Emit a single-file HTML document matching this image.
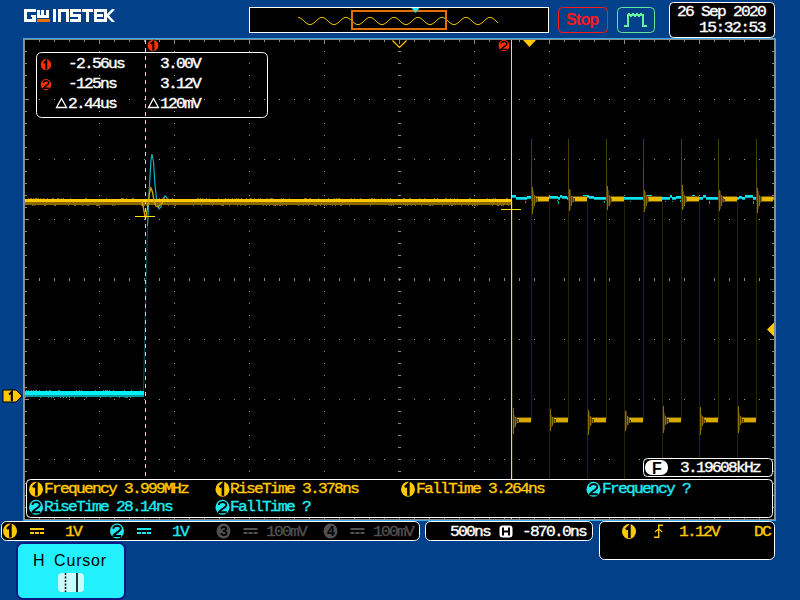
<!DOCTYPE html>
<html><head><meta charset="utf-8"><style>
html,body{margin:0;padding:0;}
body{width:800px;height:600px;overflow:hidden;background:#02408a;position:relative;font-family:"Liberation Sans",sans-serif;}
svg{position:absolute;left:0;top:0;}
</style></head><body>
<svg width="800" height="600" viewBox="0 0 800 600" shape-rendering="auto">
<rect x="23" y="38" width="753" height="483" fill="#3fa9e3" />
<rect x="24" y="39" width="751" height="481" fill="#8a8a8a" />
<rect x="25" y="40" width="749" height="479" fill="#000" />
<path d="M99 51h1v1h-1zM99 63h1v1h-1zM99 75h1v1h-1zM99 87h1v1h-1zM99 111h1v1h-1zM99 123h1v1h-1zM99 135h1v1h-1zM99 147h1v1h-1zM99 171h1v1h-1zM99 183h1v1h-1zM99 195h1v1h-1zM99 207h1v1h-1zM99 231h1v1h-1zM99 243h1v1h-1zM99 255h1v1h-1zM99 267h1v1h-1zM99 291h1v1h-1zM99 303h1v1h-1zM99 315h1v1h-1zM99 327h1v1h-1zM99 351h1v1h-1zM99 363h1v1h-1zM99 375h1v1h-1zM99 387h1v1h-1zM99 411h1v1h-1zM99 423h1v1h-1zM99 435h1v1h-1zM99 447h1v1h-1zM99 471h1v1h-1zM99 483h1v1h-1zM99 495h1v1h-1zM99 507h1v1h-1zM174 51h1v1h-1zM174 63h1v1h-1zM174 75h1v1h-1zM174 87h1v1h-1zM174 111h1v1h-1zM174 123h1v1h-1zM174 135h1v1h-1zM174 147h1v1h-1zM174 171h1v1h-1zM174 183h1v1h-1zM174 195h1v1h-1zM174 207h1v1h-1zM174 231h1v1h-1zM174 243h1v1h-1zM174 255h1v1h-1zM174 267h1v1h-1zM174 291h1v1h-1zM174 303h1v1h-1zM174 315h1v1h-1zM174 327h1v1h-1zM174 351h1v1h-1zM174 363h1v1h-1zM174 375h1v1h-1zM174 387h1v1h-1zM174 411h1v1h-1zM174 423h1v1h-1zM174 435h1v1h-1zM174 447h1v1h-1zM174 471h1v1h-1zM174 483h1v1h-1zM174 495h1v1h-1zM174 507h1v1h-1zM249 51h1v1h-1zM249 63h1v1h-1zM249 75h1v1h-1zM249 87h1v1h-1zM249 111h1v1h-1zM249 123h1v1h-1zM249 135h1v1h-1zM249 147h1v1h-1zM249 171h1v1h-1zM249 183h1v1h-1zM249 195h1v1h-1zM249 207h1v1h-1zM249 231h1v1h-1zM249 243h1v1h-1zM249 255h1v1h-1zM249 267h1v1h-1zM249 291h1v1h-1zM249 303h1v1h-1zM249 315h1v1h-1zM249 327h1v1h-1zM249 351h1v1h-1zM249 363h1v1h-1zM249 375h1v1h-1zM249 387h1v1h-1zM249 411h1v1h-1zM249 423h1v1h-1zM249 435h1v1h-1zM249 447h1v1h-1zM249 471h1v1h-1zM249 483h1v1h-1zM249 495h1v1h-1zM249 507h1v1h-1zM324 51h1v1h-1zM324 63h1v1h-1zM324 75h1v1h-1zM324 87h1v1h-1zM324 111h1v1h-1zM324 123h1v1h-1zM324 135h1v1h-1zM324 147h1v1h-1zM324 171h1v1h-1zM324 183h1v1h-1zM324 195h1v1h-1zM324 207h1v1h-1zM324 231h1v1h-1zM324 243h1v1h-1zM324 255h1v1h-1zM324 267h1v1h-1zM324 291h1v1h-1zM324 303h1v1h-1zM324 315h1v1h-1zM324 327h1v1h-1zM324 351h1v1h-1zM324 363h1v1h-1zM324 375h1v1h-1zM324 387h1v1h-1zM324 411h1v1h-1zM324 423h1v1h-1zM324 435h1v1h-1zM324 447h1v1h-1zM324 471h1v1h-1zM324 483h1v1h-1zM324 495h1v1h-1zM324 507h1v1h-1zM474 51h1v1h-1zM474 63h1v1h-1zM474 75h1v1h-1zM474 87h1v1h-1zM474 111h1v1h-1zM474 123h1v1h-1zM474 135h1v1h-1zM474 147h1v1h-1zM474 171h1v1h-1zM474 183h1v1h-1zM474 195h1v1h-1zM474 207h1v1h-1zM474 231h1v1h-1zM474 243h1v1h-1zM474 255h1v1h-1zM474 267h1v1h-1zM474 291h1v1h-1zM474 303h1v1h-1zM474 315h1v1h-1zM474 327h1v1h-1zM474 351h1v1h-1zM474 363h1v1h-1zM474 375h1v1h-1zM474 387h1v1h-1zM474 411h1v1h-1zM474 423h1v1h-1zM474 435h1v1h-1zM474 447h1v1h-1zM474 471h1v1h-1zM474 483h1v1h-1zM474 495h1v1h-1zM474 507h1v1h-1zM549 51h1v1h-1zM549 63h1v1h-1zM549 75h1v1h-1zM549 87h1v1h-1zM549 111h1v1h-1zM549 123h1v1h-1zM549 135h1v1h-1zM549 147h1v1h-1zM549 171h1v1h-1zM549 183h1v1h-1zM549 195h1v1h-1zM549 207h1v1h-1zM549 231h1v1h-1zM549 243h1v1h-1zM549 255h1v1h-1zM549 267h1v1h-1zM549 291h1v1h-1zM549 303h1v1h-1zM549 315h1v1h-1zM549 327h1v1h-1zM549 351h1v1h-1zM549 363h1v1h-1zM549 375h1v1h-1zM549 387h1v1h-1zM549 411h1v1h-1zM549 423h1v1h-1zM549 435h1v1h-1zM549 447h1v1h-1zM549 471h1v1h-1zM549 483h1v1h-1zM549 495h1v1h-1zM549 507h1v1h-1zM624 51h1v1h-1zM624 63h1v1h-1zM624 75h1v1h-1zM624 87h1v1h-1zM624 111h1v1h-1zM624 123h1v1h-1zM624 135h1v1h-1zM624 147h1v1h-1zM624 171h1v1h-1zM624 183h1v1h-1zM624 195h1v1h-1zM624 207h1v1h-1zM624 231h1v1h-1zM624 243h1v1h-1zM624 255h1v1h-1zM624 267h1v1h-1zM624 291h1v1h-1zM624 303h1v1h-1zM624 315h1v1h-1zM624 327h1v1h-1zM624 351h1v1h-1zM624 363h1v1h-1zM624 375h1v1h-1zM624 387h1v1h-1zM624 411h1v1h-1zM624 423h1v1h-1zM624 435h1v1h-1zM624 447h1v1h-1zM624 471h1v1h-1zM624 483h1v1h-1zM624 495h1v1h-1zM624 507h1v1h-1zM699 51h1v1h-1zM699 63h1v1h-1zM699 75h1v1h-1zM699 87h1v1h-1zM699 111h1v1h-1zM699 123h1v1h-1zM699 135h1v1h-1zM699 147h1v1h-1zM699 171h1v1h-1zM699 183h1v1h-1zM699 195h1v1h-1zM699 207h1v1h-1zM699 231h1v1h-1zM699 243h1v1h-1zM699 255h1v1h-1zM699 267h1v1h-1zM699 291h1v1h-1zM699 303h1v1h-1zM699 315h1v1h-1zM699 327h1v1h-1zM699 351h1v1h-1zM699 363h1v1h-1zM699 375h1v1h-1zM699 387h1v1h-1zM699 411h1v1h-1zM699 423h1v1h-1zM699 435h1v1h-1zM699 447h1v1h-1zM699 471h1v1h-1zM699 483h1v1h-1zM699 495h1v1h-1zM699 507h1v1h-1zM39 99h1v1h-1zM54 99h1v1h-1zM69 99h1v1h-1zM84 99h1v1h-1zM99 99h1v1h-1zM114 99h1v1h-1zM129 99h1v1h-1zM144 99h1v1h-1zM159 99h1v1h-1zM174 99h1v1h-1zM189 99h1v1h-1zM204 99h1v1h-1zM219 99h1v1h-1zM234 99h1v1h-1zM249 99h1v1h-1zM264 99h1v1h-1zM279 99h1v1h-1zM294 99h1v1h-1zM309 99h1v1h-1zM324 99h1v1h-1zM339 99h1v1h-1zM354 99h1v1h-1zM369 99h1v1h-1zM384 99h1v1h-1zM399 99h1v1h-1zM414 99h1v1h-1zM429 99h1v1h-1zM444 99h1v1h-1zM459 99h1v1h-1zM474 99h1v1h-1zM489 99h1v1h-1zM504 99h1v1h-1zM519 99h1v1h-1zM534 99h1v1h-1zM549 99h1v1h-1zM564 99h1v1h-1zM579 99h1v1h-1zM594 99h1v1h-1zM609 99h1v1h-1zM624 99h1v1h-1zM639 99h1v1h-1zM654 99h1v1h-1zM669 99h1v1h-1zM684 99h1v1h-1zM699 99h1v1h-1zM714 99h1v1h-1zM729 99h1v1h-1zM744 99h1v1h-1zM759 99h1v1h-1zM39 159h1v1h-1zM54 159h1v1h-1zM69 159h1v1h-1zM84 159h1v1h-1zM99 159h1v1h-1zM114 159h1v1h-1zM129 159h1v1h-1zM144 159h1v1h-1zM159 159h1v1h-1zM174 159h1v1h-1zM189 159h1v1h-1zM204 159h1v1h-1zM219 159h1v1h-1zM234 159h1v1h-1zM249 159h1v1h-1zM264 159h1v1h-1zM279 159h1v1h-1zM294 159h1v1h-1zM309 159h1v1h-1zM324 159h1v1h-1zM339 159h1v1h-1zM354 159h1v1h-1zM369 159h1v1h-1zM384 159h1v1h-1zM399 159h1v1h-1zM414 159h1v1h-1zM429 159h1v1h-1zM444 159h1v1h-1zM459 159h1v1h-1zM474 159h1v1h-1zM489 159h1v1h-1zM504 159h1v1h-1zM519 159h1v1h-1zM534 159h1v1h-1zM549 159h1v1h-1zM564 159h1v1h-1zM579 159h1v1h-1zM594 159h1v1h-1zM609 159h1v1h-1zM624 159h1v1h-1zM639 159h1v1h-1zM654 159h1v1h-1zM669 159h1v1h-1zM684 159h1v1h-1zM699 159h1v1h-1zM714 159h1v1h-1zM729 159h1v1h-1zM744 159h1v1h-1zM759 159h1v1h-1zM39 219h1v1h-1zM54 219h1v1h-1zM69 219h1v1h-1zM84 219h1v1h-1zM99 219h1v1h-1zM114 219h1v1h-1zM129 219h1v1h-1zM144 219h1v1h-1zM159 219h1v1h-1zM174 219h1v1h-1zM189 219h1v1h-1zM204 219h1v1h-1zM219 219h1v1h-1zM234 219h1v1h-1zM249 219h1v1h-1zM264 219h1v1h-1zM279 219h1v1h-1zM294 219h1v1h-1zM309 219h1v1h-1zM324 219h1v1h-1zM339 219h1v1h-1zM354 219h1v1h-1zM369 219h1v1h-1zM384 219h1v1h-1zM399 219h1v1h-1zM414 219h1v1h-1zM429 219h1v1h-1zM444 219h1v1h-1zM459 219h1v1h-1zM474 219h1v1h-1zM489 219h1v1h-1zM504 219h1v1h-1zM519 219h1v1h-1zM534 219h1v1h-1zM549 219h1v1h-1zM564 219h1v1h-1zM579 219h1v1h-1zM594 219h1v1h-1zM609 219h1v1h-1zM624 219h1v1h-1zM639 219h1v1h-1zM654 219h1v1h-1zM669 219h1v1h-1zM684 219h1v1h-1zM699 219h1v1h-1zM714 219h1v1h-1zM729 219h1v1h-1zM744 219h1v1h-1zM759 219h1v1h-1zM39 339h1v1h-1zM54 339h1v1h-1zM69 339h1v1h-1zM84 339h1v1h-1zM99 339h1v1h-1zM114 339h1v1h-1zM129 339h1v1h-1zM144 339h1v1h-1zM159 339h1v1h-1zM174 339h1v1h-1zM189 339h1v1h-1zM204 339h1v1h-1zM219 339h1v1h-1zM234 339h1v1h-1zM249 339h1v1h-1zM264 339h1v1h-1zM279 339h1v1h-1zM294 339h1v1h-1zM309 339h1v1h-1zM324 339h1v1h-1zM339 339h1v1h-1zM354 339h1v1h-1zM369 339h1v1h-1zM384 339h1v1h-1zM399 339h1v1h-1zM414 339h1v1h-1zM429 339h1v1h-1zM444 339h1v1h-1zM459 339h1v1h-1zM474 339h1v1h-1zM489 339h1v1h-1zM504 339h1v1h-1zM519 339h1v1h-1zM534 339h1v1h-1zM549 339h1v1h-1zM564 339h1v1h-1zM579 339h1v1h-1zM594 339h1v1h-1zM609 339h1v1h-1zM624 339h1v1h-1zM639 339h1v1h-1zM654 339h1v1h-1zM669 339h1v1h-1zM684 339h1v1h-1zM699 339h1v1h-1zM714 339h1v1h-1zM729 339h1v1h-1zM744 339h1v1h-1zM759 339h1v1h-1zM39 399h1v1h-1zM54 399h1v1h-1zM69 399h1v1h-1zM84 399h1v1h-1zM99 399h1v1h-1zM114 399h1v1h-1zM129 399h1v1h-1zM144 399h1v1h-1zM159 399h1v1h-1zM174 399h1v1h-1zM189 399h1v1h-1zM204 399h1v1h-1zM219 399h1v1h-1zM234 399h1v1h-1zM249 399h1v1h-1zM264 399h1v1h-1zM279 399h1v1h-1zM294 399h1v1h-1zM309 399h1v1h-1zM324 399h1v1h-1zM339 399h1v1h-1zM354 399h1v1h-1zM369 399h1v1h-1zM384 399h1v1h-1zM399 399h1v1h-1zM414 399h1v1h-1zM429 399h1v1h-1zM444 399h1v1h-1zM459 399h1v1h-1zM474 399h1v1h-1zM489 399h1v1h-1zM504 399h1v1h-1zM519 399h1v1h-1zM534 399h1v1h-1zM549 399h1v1h-1zM564 399h1v1h-1zM579 399h1v1h-1zM594 399h1v1h-1zM609 399h1v1h-1zM624 399h1v1h-1zM639 399h1v1h-1zM654 399h1v1h-1zM669 399h1v1h-1zM684 399h1v1h-1zM699 399h1v1h-1zM714 399h1v1h-1zM729 399h1v1h-1zM744 399h1v1h-1zM759 399h1v1h-1zM39 459h1v1h-1zM54 459h1v1h-1zM69 459h1v1h-1zM84 459h1v1h-1zM99 459h1v1h-1zM114 459h1v1h-1zM129 459h1v1h-1zM144 459h1v1h-1zM159 459h1v1h-1zM174 459h1v1h-1zM189 459h1v1h-1zM204 459h1v1h-1zM219 459h1v1h-1zM234 459h1v1h-1zM249 459h1v1h-1zM264 459h1v1h-1zM279 459h1v1h-1zM294 459h1v1h-1zM309 459h1v1h-1zM324 459h1v1h-1zM339 459h1v1h-1zM354 459h1v1h-1zM369 459h1v1h-1zM384 459h1v1h-1zM399 459h1v1h-1zM414 459h1v1h-1zM429 459h1v1h-1zM444 459h1v1h-1zM459 459h1v1h-1zM474 459h1v1h-1zM489 459h1v1h-1zM504 459h1v1h-1zM519 459h1v1h-1zM534 459h1v1h-1zM549 459h1v1h-1zM564 459h1v1h-1zM579 459h1v1h-1zM594 459h1v1h-1zM609 459h1v1h-1zM624 459h1v1h-1zM639 459h1v1h-1zM654 459h1v1h-1zM669 459h1v1h-1zM684 459h1v1h-1zM699 459h1v1h-1zM714 459h1v1h-1zM729 459h1v1h-1zM744 459h1v1h-1zM759 459h1v1h-1z" fill="#9a9a9a"/>
<path d="M39 40h1v2h-1zM39 517h1v2h-1zM54 40h1v2h-1zM54 517h1v2h-1zM69 40h1v2h-1zM69 517h1v2h-1zM84 40h1v2h-1zM84 517h1v2h-1zM99 40h1v4h-1zM99 515h1v4h-1zM114 40h1v2h-1zM114 517h1v2h-1zM129 40h1v2h-1zM129 517h1v2h-1zM144 40h1v2h-1zM144 517h1v2h-1zM159 40h1v2h-1zM159 517h1v2h-1zM174 40h1v4h-1zM174 515h1v4h-1zM189 40h1v2h-1zM189 517h1v2h-1zM204 40h1v2h-1zM204 517h1v2h-1zM219 40h1v2h-1zM219 517h1v2h-1zM234 40h1v2h-1zM234 517h1v2h-1zM249 40h1v4h-1zM249 515h1v4h-1zM264 40h1v2h-1zM264 517h1v2h-1zM279 40h1v2h-1zM279 517h1v2h-1zM294 40h1v2h-1zM294 517h1v2h-1zM309 40h1v2h-1zM309 517h1v2h-1zM324 40h1v4h-1zM324 515h1v4h-1zM339 40h1v2h-1zM339 517h1v2h-1zM354 40h1v2h-1zM354 517h1v2h-1zM369 40h1v2h-1zM369 517h1v2h-1zM384 40h1v2h-1zM384 517h1v2h-1zM399 40h1v4h-1zM399 515h1v4h-1zM414 40h1v2h-1zM414 517h1v2h-1zM429 40h1v2h-1zM429 517h1v2h-1zM444 40h1v2h-1zM444 517h1v2h-1zM459 40h1v2h-1zM459 517h1v2h-1zM474 40h1v4h-1zM474 515h1v4h-1zM489 40h1v2h-1zM489 517h1v2h-1zM504 40h1v2h-1zM504 517h1v2h-1zM519 40h1v2h-1zM519 517h1v2h-1zM534 40h1v2h-1zM534 517h1v2h-1zM549 40h1v4h-1zM549 515h1v4h-1zM564 40h1v2h-1zM564 517h1v2h-1zM579 40h1v2h-1zM579 517h1v2h-1zM594 40h1v2h-1zM594 517h1v2h-1zM609 40h1v2h-1zM609 517h1v2h-1zM624 40h1v4h-1zM624 515h1v4h-1zM639 40h1v2h-1zM639 517h1v2h-1zM654 40h1v2h-1zM654 517h1v2h-1zM669 40h1v2h-1zM669 517h1v2h-1zM684 40h1v2h-1zM684 517h1v2h-1zM699 40h1v4h-1zM699 515h1v4h-1zM714 40h1v2h-1zM714 517h1v2h-1zM729 40h1v2h-1zM729 517h1v2h-1zM744 40h1v2h-1zM744 517h1v2h-1zM759 40h1v2h-1zM759 517h1v2h-1zM25 51h2v1h-2zM772 51h2v1h-2zM25 63h2v1h-2zM772 63h2v1h-2zM25 75h2v1h-2zM772 75h2v1h-2zM25 87h2v1h-2zM772 87h2v1h-2zM25 99h4v1h-4zM770 99h4v1h-4zM25 111h2v1h-2zM772 111h2v1h-2zM25 123h2v1h-2zM772 123h2v1h-2zM25 135h2v1h-2zM772 135h2v1h-2zM25 147h2v1h-2zM772 147h2v1h-2zM25 159h4v1h-4zM770 159h4v1h-4zM25 171h2v1h-2zM772 171h2v1h-2zM25 183h2v1h-2zM772 183h2v1h-2zM25 195h2v1h-2zM772 195h2v1h-2zM25 207h2v1h-2zM772 207h2v1h-2zM25 219h4v1h-4zM770 219h4v1h-4zM25 231h2v1h-2zM772 231h2v1h-2zM25 243h2v1h-2zM772 243h2v1h-2zM25 255h2v1h-2zM772 255h2v1h-2zM25 267h2v1h-2zM772 267h2v1h-2zM25 279h4v1h-4zM770 279h4v1h-4zM25 291h2v1h-2zM772 291h2v1h-2zM25 303h2v1h-2zM772 303h2v1h-2zM25 315h2v1h-2zM772 315h2v1h-2zM25 327h2v1h-2zM772 327h2v1h-2zM25 339h4v1h-4zM770 339h4v1h-4zM25 351h2v1h-2zM772 351h2v1h-2zM25 363h2v1h-2zM772 363h2v1h-2zM25 375h2v1h-2zM772 375h2v1h-2zM25 387h2v1h-2zM772 387h2v1h-2zM25 399h4v1h-4zM770 399h4v1h-4zM25 411h2v1h-2zM772 411h2v1h-2zM25 423h2v1h-2zM772 423h2v1h-2zM25 435h2v1h-2zM772 435h2v1h-2zM25 447h2v1h-2zM772 447h2v1h-2zM25 459h4v1h-4zM770 459h4v1h-4zM25 471h2v1h-2zM772 471h2v1h-2zM25 483h2v1h-2zM772 483h2v1h-2zM25 495h2v1h-2zM772 495h2v1h-2zM25 507h2v1h-2zM772 507h2v1h-2zM39 278h1v3h-1zM54 278h1v3h-1zM69 278h1v3h-1zM84 278h1v3h-1zM99 278h1v3h-1zM114 278h1v3h-1zM129 278h1v3h-1zM144 278h1v3h-1zM159 278h1v3h-1zM174 278h1v3h-1zM189 278h1v3h-1zM204 278h1v3h-1zM219 278h1v3h-1zM234 278h1v3h-1zM249 278h1v3h-1zM264 278h1v3h-1zM279 278h1v3h-1zM294 278h1v3h-1zM309 278h1v3h-1zM324 278h1v3h-1zM339 278h1v3h-1zM354 278h1v3h-1zM369 278h1v3h-1zM384 278h1v3h-1zM399 278h1v3h-1zM414 278h1v3h-1zM429 278h1v3h-1zM444 278h1v3h-1zM459 278h1v3h-1zM474 278h1v3h-1zM489 278h1v3h-1zM504 278h1v3h-1zM519 278h1v3h-1zM534 278h1v3h-1zM549 278h1v3h-1zM564 278h1v3h-1zM579 278h1v3h-1zM594 278h1v3h-1zM609 278h1v3h-1zM624 278h1v3h-1zM639 278h1v3h-1zM654 278h1v3h-1zM669 278h1v3h-1zM684 278h1v3h-1zM699 278h1v3h-1zM714 278h1v3h-1zM729 278h1v3h-1zM744 278h1v3h-1zM759 278h1v3h-1zM398 51h3v1h-3zM398 63h3v1h-3zM398 75h3v1h-3zM398 87h3v1h-3zM398 99h3v1h-3zM398 111h3v1h-3zM398 123h3v1h-3zM398 135h3v1h-3zM398 147h3v1h-3zM398 159h3v1h-3zM398 171h3v1h-3zM398 183h3v1h-3zM398 195h3v1h-3zM398 207h3v1h-3zM398 219h3v1h-3zM398 231h3v1h-3zM398 243h3v1h-3zM398 255h3v1h-3zM398 267h3v1h-3zM398 279h3v1h-3zM398 291h3v1h-3zM398 303h3v1h-3zM398 315h3v1h-3zM398 327h3v1h-3zM398 339h3v1h-3zM398 351h3v1h-3zM398 363h3v1h-3zM398 375h3v1h-3zM398 387h3v1h-3zM398 399h3v1h-3zM398 411h3v1h-3zM398 423h3v1h-3zM398 435h3v1h-3zM398 447h3v1h-3zM398 459h3v1h-3zM398 471h3v1h-3zM398 483h3v1h-3zM398 495h3v1h-3zM398 507h3v1h-3z" fill="#8a8a8a"/>
<path d="M25 395h119v2h-119z" fill="#0a9aa0"/>
<path d="M25 391h119v4h-119z" fill="#00f0f8"/>
<path d="M26 390h1v1h-1zM28 390h1v1h-1zM31 390h1v1h-1zM33 390h1v1h-1zM35 390h1v1h-1zM36 390h1v1h-1zM39 390h1v1h-1zM46 390h1v1h-1zM49 390h1v1h-1zM50 390h1v1h-1zM58 390h1v1h-1zM59 390h1v1h-1zM76 390h1v1h-1zM79 390h1v1h-1zM81 390h1v1h-1zM95 390h1v1h-1zM103 390h1v1h-1zM105 390h1v1h-1zM106 390h1v1h-1zM107 390h1v1h-1zM109 390h1v1h-1zM113 390h1v1h-1zM124 390h1v1h-1zM131 390h1v1h-1zM140 390h1v1h-1z" fill="#0a9aa0"/>
<path d="M25 397h1v1h-1zM40 397h1v1h-1zM48 397h1v1h-1zM51 397h1v1h-1zM53 397h1v1h-1zM60 397h1v1h-1zM63 397h1v1h-1zM66 397h1v1h-1zM69 397h1v1h-1zM74 397h1v1h-1zM86 397h1v1h-1zM100 397h1v1h-1zM110 397h1v1h-1zM119 397h1v1h-1zM125 397h1v1h-1zM126 397h1v1h-1zM127 397h1v1h-1zM130 397h1v1h-1z" fill="#0a9aa0"/>
<path d="M143.5 391 L147.5 226" stroke="#064a50" stroke-width="1.2" fill="none"/>
<path d="M147.5 226.0 L149.5 185.0 L151.0 160.0 L152.0 154.0 L153.5 162.0 L155.0 185.0 L157.0 203.0 L159.0 209.0 L161.0 207.0 L163.0 199.0 L165.0 196.0 L167.0 198.0 L169.0 200.0" fill="none" stroke="#14b0c0" stroke-width="1.2" stroke-opacity="1"/>
<path d="M25 202h487v3h-487z" fill="#8a6a00"/>
<path d="M25 199h487v3h-487z" fill="#ffc800"/>
<path d="M28 198h1v1h-1zM30 198h1v1h-1zM31 198h1v1h-1zM33 198h1v1h-1zM35 198h1v1h-1zM36 198h1v1h-1zM37 198h1v1h-1zM38 198h1v1h-1zM40 198h1v1h-1zM43 198h1v1h-1zM47 198h1v1h-1zM52 198h1v1h-1zM53 198h1v1h-1zM57 198h1v1h-1zM58 198h1v1h-1zM61 198h1v1h-1zM63 198h1v1h-1zM70 198h1v1h-1zM85 198h1v1h-1zM86 198h1v1h-1zM106 198h1v1h-1zM121 198h1v1h-1zM122 198h1v1h-1zM123 198h1v1h-1zM126 198h1v1h-1zM132 198h1v1h-1zM133 198h1v1h-1zM148 198h1v1h-1zM159 198h1v1h-1zM162 198h1v1h-1zM164 198h1v1h-1zM172 198h1v1h-1zM197 198h1v1h-1zM198 198h1v1h-1zM200 198h1v1h-1zM202 198h1v1h-1zM206 198h1v1h-1zM209 198h1v1h-1zM218 198h1v1h-1zM225 198h1v1h-1zM228 198h1v1h-1zM232 198h1v1h-1zM236 198h1v1h-1zM238 198h1v1h-1zM241 198h1v1h-1zM246 198h1v1h-1zM250 198h1v1h-1zM251 198h1v1h-1zM254 198h1v1h-1zM258 198h1v1h-1zM260 198h1v1h-1zM267 198h1v1h-1zM270 198h1v1h-1zM271 198h1v1h-1zM272 198h1v1h-1zM281 198h1v1h-1zM283 198h1v1h-1zM289 198h1v1h-1zM304 198h1v1h-1zM305 198h1v1h-1zM306 198h1v1h-1zM309 198h1v1h-1zM310 198h1v1h-1zM318 198h1v1h-1zM328 198h1v1h-1zM334 198h1v1h-1zM336 198h1v1h-1zM338 198h1v1h-1zM339 198h1v1h-1zM351 198h1v1h-1zM354 198h1v1h-1zM360 198h1v1h-1zM371 198h1v1h-1zM372 198h1v1h-1zM374 198h1v1h-1zM381 198h1v1h-1zM387 198h1v1h-1zM390 198h1v1h-1zM403 198h1v1h-1zM404 198h1v1h-1zM409 198h1v1h-1zM410 198h1v1h-1zM419 198h1v1h-1zM424 198h1v1h-1zM434 198h1v1h-1zM437 198h1v1h-1zM445 198h1v1h-1zM446 198h1v1h-1zM450 198h1v1h-1zM454 198h1v1h-1zM457 198h1v1h-1zM469 198h1v1h-1zM470 198h1v1h-1zM487 198h1v1h-1zM493 198h1v1h-1zM495 198h1v1h-1zM506 198h1v1h-1zM507 198h1v1h-1z" fill="#8a6a00"/>
<path d="M32 205h1v1h-1zM34 205h1v1h-1zM44 205h1v1h-1zM45 205h1v1h-1zM54 205h1v1h-1zM55 205h1v1h-1zM68 205h1v1h-1zM74 205h1v1h-1zM75 205h1v1h-1zM82 205h1v1h-1zM87 205h1v1h-1zM88 205h1v1h-1zM96 205h1v1h-1zM97 205h1v1h-1zM98 205h1v1h-1zM99 205h1v1h-1zM112 205h1v1h-1zM114 205h1v1h-1zM141 205h1v1h-1zM142 205h1v1h-1zM143 205h1v1h-1zM144 205h1v1h-1zM146 205h1v1h-1zM161 205h1v1h-1zM168 205h1v1h-1zM174 205h1v1h-1zM175 205h1v1h-1zM193 205h1v1h-1zM201 205h1v1h-1zM212 205h1v1h-1zM221 205h1v1h-1zM222 205h1v1h-1zM223 205h1v1h-1zM229 205h1v1h-1zM237 205h1v1h-1zM240 205h1v1h-1zM245 205h1v1h-1zM263 205h1v1h-1zM266 205h1v1h-1zM269 205h1v1h-1zM273 205h1v1h-1zM274 205h1v1h-1zM275 205h1v1h-1zM277 205h1v1h-1zM279 205h1v1h-1zM280 205h1v1h-1zM282 205h1v1h-1zM286 205h1v1h-1zM298 205h1v1h-1zM303 205h1v1h-1zM308 205h1v1h-1zM314 205h1v1h-1zM315 205h1v1h-1zM316 205h1v1h-1zM320 205h1v1h-1zM324 205h1v1h-1zM326 205h1v1h-1zM332 205h1v1h-1zM335 205h1v1h-1zM340 205h1v1h-1zM341 205h1v1h-1zM349 205h1v1h-1zM370 205h1v1h-1zM389 205h1v1h-1zM391 205h1v1h-1zM393 205h1v1h-1zM405 205h1v1h-1zM407 205h1v1h-1zM411 205h1v1h-1zM415 205h1v1h-1zM421 205h1v1h-1zM429 205h1v1h-1zM430 205h1v1h-1zM432 205h1v1h-1zM442 205h1v1h-1zM449 205h1v1h-1zM451 205h1v1h-1zM452 205h1v1h-1zM461 205h1v1h-1zM468 205h1v1h-1zM472 205h1v1h-1zM474 205h1v1h-1zM475 205h1v1h-1zM477 205h1v1h-1zM492 205h1v1h-1zM497 205h1v1h-1zM498 205h1v1h-1zM501 205h1v1h-1zM503 205h1v1h-1zM508 205h1v1h-1zM511 205h1v1h-1z" fill="#8a6a00"/>
<path d="M142.0 201.0 L144.0 211.0 L145.5 219.0 L147.5 208.0 L149.5 193.0 L151.0 188.0 L152.5 192.0 L154.0 201.0 L156.0 206.0 L158.0 207.0 L160.0 205.0 L163.0 202.0" fill="none" stroke="#d8a800" stroke-width="1.3" stroke-opacity="1"/>
<path d="M511 197h5v1h-5zM516 199h5v1h-5zM521 199h6v1h-6zM525 201h1v2h-1zM527 198h8v1h-8zM535 199h2v1h-2zM537 198h2v1h-2zM539 198h8v1h-8zM545 200h1v2h-1zM547 198h8v1h-8zM555 198h3v1h-3zM557 200h1v1h-1zM558 199h2v1h-2zM558 201h1v3h-1zM560 197h2v1h-2zM562 198h5v1h-5zM567 199h6v1h-6zM573 199h5v1h-5zM578 198h5v1h-5zM583 197h6v1h-6zM585 199h1v2h-1zM589 198h3v1h-3zM592 198h2v1h-2zM594 199h5v1h-5zM599 199h5v1h-5zM604 199h8v1h-8zM604 201h1v2h-1zM612 198h5v1h-5zM617 198h2v1h-2zM619 199h8v1h-8zM627 199h4v1h-4zM630 201h1v1h-1zM631 199h3v1h-3zM634 199h2v1h-2zM636 199h5v1h-5zM641 199h3v1h-3zM644 197h8v1h-8zM650 199h1v1h-1zM652 199h5v1h-5zM657 199h2v1h-2zM659 199h6v1h-6zM665 199h2v1h-2zM665 201h1v1h-1zM667 199h3v1h-3zM670 197h2v1h-2zM672 199h4v1h-4zM672 201h1v1h-1zM676 198h6v1h-6zM680 200h1v2h-1zM682 198h4v1h-4zM686 199h6v1h-6zM692 197h3v1h-3zM695 199h8v1h-8zM703 197h3v1h-3zM706 199h8v1h-8zM709 201h1v3h-1zM714 199h5v1h-5zM719 199h5v1h-5zM719 201h1v3h-1zM724 199h4v1h-4zM728 199h5v1h-5zM733 199h6v1h-6zM739 198h3v1h-3zM742 199h3v1h-3zM745 197h8v1h-8zM753 199h2v1h-2zM753 201h1v3h-1zM755 199h2v1h-2zM757 199h5v1h-5zM758 201h1v2h-1zM762 198h4v1h-4zM766 199h3v1h-3zM769 199h5v1h-5z" fill="#08a8b0"/>
<path d="M511 195h5v2h-5zM516 197h5v2h-5zM521 197h6v2h-6zM527 196h8v2h-8zM535 197h2v2h-2zM537 196h2v2h-2zM539 196h8v2h-8zM547 196h8v2h-8zM555 196h3v2h-3zM558 197h2v2h-2zM560 195h2v2h-2zM562 196h5v2h-5zM567 197h6v2h-6zM573 197h5v2h-5zM578 196h5v2h-5zM583 195h6v2h-6zM589 196h3v2h-3zM592 196h2v2h-2zM594 197h5v2h-5zM599 197h5v2h-5zM604 197h8v2h-8zM612 196h5v2h-5zM617 196h2v2h-2zM619 197h8v2h-8zM627 197h4v2h-4zM631 197h3v2h-3zM634 197h2v2h-2zM636 197h5v2h-5zM641 197h3v2h-3zM644 195h8v2h-8zM652 197h5v2h-5zM657 197h2v2h-2zM659 197h6v2h-6zM665 197h2v2h-2zM667 197h3v2h-3zM670 195h2v2h-2zM672 197h4v2h-4zM676 196h6v2h-6zM682 196h4v2h-4zM686 197h6v2h-6zM692 195h3v2h-3zM695 197h8v2h-8zM703 195h3v2h-3zM706 197h8v2h-8zM714 197h5v2h-5zM719 197h5v2h-5zM724 197h4v2h-4zM728 197h5v2h-5zM733 197h6v2h-6zM739 196h3v2h-3zM742 197h3v2h-3zM745 195h8v2h-8zM753 197h2v2h-2zM755 197h2v2h-2zM757 197h5v2h-5zM762 196h4v2h-4zM766 197h3v2h-3zM769 197h5v2h-5z" fill="#10e0ec"/>
<path d="M512 201h1v317h-1z" fill="#2a2200"/>
<path d="M531 201h1v219h-1z" fill="#2a2200"/>
<path d="M531 139h1v62h-1z" fill="#4a3c00"/>
<path d="M531 165h1v36h-1z" fill="#5a4800"/>
<path d="M515 417h16v1h-16zM515 422h16v1h-16z" fill="#5a4600"/>
<path d="M515 418h16v4h-16z" fill="#d8aa00"/>
<path d="M534 196h15v1h-15zM534 201h15v1h-15z" fill="#6a5200"/>
<path d="M534 197h15v4h-15z" fill="#e8b800"/>
<path d="M533 191h1v18h-1zM535 197h1v6h-1zM537 198h1v3h-1z" fill="#4a3c00"/>
<path d="M532 187h1v27h-1zM534 195h1v11h-1zM536 198h1v4h-1z" fill="#8a6e00"/>
<path d="M514 415h1v13h-1zM516 417h1v7h-1zM518 419h1v3h-1z" fill="#4a3c00"/>
<path d="M513 408h1v26h-1zM515 417h1v10h-1zM517 419h1v4h-1z" fill="#8a6e00"/>
<path d="M549 201h1v317h-1z" fill="#2a2200"/>
<path d="M568 201h1v219h-1z" fill="#2a2200"/>
<path d="M568 139h1v62h-1z" fill="#4a3c00"/>
<path d="M568 165h1v36h-1z" fill="#5a4800"/>
<path d="M552 417h16v1h-16zM552 422h16v1h-16z" fill="#5a4600"/>
<path d="M552 418h16v4h-16z" fill="#d8aa00"/>
<path d="M571 196h16v1h-16zM571 201h16v1h-16z" fill="#6a5200"/>
<path d="M571 197h16v4h-16z" fill="#e8b800"/>
<path d="M570 190h1v19h-1zM572 197h1v6h-1zM574 198h1v4h-1z" fill="#4a3c00"/>
<path d="M569 189h1v22h-1zM571 196h1v10h-1zM573 198h1v4h-1z" fill="#8a6e00"/>
<path d="M551 415h1v12h-1zM553 418h1v6h-1zM555 419h1v3h-1z" fill="#4a3c00"/>
<path d="M550 409h1v22h-1zM552 417h1v9h-1zM554 419h1v4h-1z" fill="#8a6e00"/>
<path d="M587 201h1v317h-1z" fill="#2a2200"/>
<path d="M606 201h1v219h-1z" fill="#2a2200"/>
<path d="M606 139h1v62h-1z" fill="#4a3c00"/>
<path d="M606 165h1v36h-1z" fill="#5a4800"/>
<path d="M590 417h16v1h-16zM590 422h16v1h-16z" fill="#5a4600"/>
<path d="M590 418h16v4h-16z" fill="#d8aa00"/>
<path d="M609 196h15v1h-15zM609 201h15v1h-15z" fill="#6a5200"/>
<path d="M609 197h15v4h-15z" fill="#e8b800"/>
<path d="M608 190h1v16h-1zM610 197h1v7h-1z" fill="#4a3c00"/>
<path d="M607 186h1v24h-1zM609 195h1v11h-1zM611 198h1v4h-1z" fill="#8a6e00"/>
<path d="M589 412h1v18h-1zM591 418h1v7h-1zM593 419h1v4h-1z" fill="#4a3c00"/>
<path d="M588 410h1v25h-1zM590 416h1v10h-1zM592 419h1v4h-1z" fill="#8a6e00"/>
<path d="M624 201h1v317h-1z" fill="#2a2200"/>
<path d="M643 201h1v219h-1z" fill="#2a2200"/>
<path d="M643 139h1v62h-1z" fill="#4a3c00"/>
<path d="M643 165h1v36h-1z" fill="#5a4800"/>
<path d="M627 417h16v1h-16zM627 422h16v1h-16z" fill="#5a4600"/>
<path d="M627 418h16v4h-16z" fill="#d8aa00"/>
<path d="M646 196h16v1h-16zM646 201h16v1h-16z" fill="#6a5200"/>
<path d="M646 197h16v4h-16z" fill="#e8b800"/>
<path d="M645 192h1v17h-1zM647 197h1v6h-1z" fill="#4a3c00"/>
<path d="M644 190h1v22h-1zM646 195h1v11h-1zM648 198h1v4h-1z" fill="#8a6e00"/>
<path d="M626 411h1v18h-1zM628 418h1v7h-1zM630 420h1v3h-1z" fill="#4a3c00"/>
<path d="M625 411h1v20h-1zM627 416h1v9h-1zM629 419h1v4h-1z" fill="#8a6e00"/>
<path d="M662 201h1v317h-1z" fill="#2a2200"/>
<path d="M681 201h1v219h-1z" fill="#2a2200"/>
<path d="M681 139h1v62h-1z" fill="#4a3c00"/>
<path d="M681 165h1v36h-1z" fill="#5a4800"/>
<path d="M665 417h16v1h-16zM665 422h16v1h-16z" fill="#5a4600"/>
<path d="M665 418h16v4h-16z" fill="#d8aa00"/>
<path d="M684 196h15v1h-15zM684 201h15v1h-15z" fill="#6a5200"/>
<path d="M684 197h15v4h-15z" fill="#e8b800"/>
<path d="M683 191h1v18h-1zM685 197h1v6h-1z" fill="#4a3c00"/>
<path d="M682 185h1v25h-1zM684 195h1v11h-1zM686 198h1v4h-1z" fill="#8a6e00"/>
<path d="M664 413h1v17h-1zM666 418h1v6h-1zM668 419h1v4h-1z" fill="#4a3c00"/>
<path d="M663 406h1v27h-1zM665 416h1v9h-1zM667 419h1v5h-1z" fill="#8a6e00"/>
<path d="M699 201h1v317h-1z" fill="#2a2200"/>
<path d="M718 201h1v219h-1z" fill="#2a2200"/>
<path d="M718 139h1v62h-1z" fill="#4a3c00"/>
<path d="M718 165h1v36h-1z" fill="#5a4800"/>
<path d="M702 417h16v1h-16zM702 422h16v1h-16z" fill="#5a4600"/>
<path d="M702 418h16v4h-16z" fill="#d8aa00"/>
<path d="M721 196h16v1h-16zM721 201h16v1h-16z" fill="#6a5200"/>
<path d="M721 197h16v4h-16z" fill="#e8b800"/>
<path d="M720 191h1v18h-1zM722 196h1v7h-1zM724 199h1v3h-1z" fill="#4a3c00"/>
<path d="M719 190h1v21h-1zM721 195h1v11h-1zM723 198h1v4h-1z" fill="#8a6e00"/>
<path d="M701 414h1v16h-1zM703 418h1v6h-1zM705 420h1v3h-1z" fill="#4a3c00"/>
<path d="M700 407h1v28h-1zM702 416h1v10h-1zM704 419h1v4h-1z" fill="#8a6e00"/>
<path d="M737 201h1v317h-1z" fill="#2a2200"/>
<path d="M756 201h1v219h-1z" fill="#2a2200"/>
<path d="M756 139h1v62h-1z" fill="#4a3c00"/>
<path d="M756 165h1v36h-1z" fill="#5a4800"/>
<path d="M740 417h16v1h-16zM740 422h16v1h-16z" fill="#5a4600"/>
<path d="M740 418h16v4h-16z" fill="#d8aa00"/>
<path d="M759 196h14v1h-14zM759 201h14v1h-14z" fill="#6a5200"/>
<path d="M759 197h14v4h-14z" fill="#e8b800"/>
<path d="M758 191h1v18h-1zM760 196h1v7h-1z" fill="#4a3c00"/>
<path d="M757 188h1v25h-1zM759 195h1v11h-1zM761 197h1v5h-1z" fill="#8a6e00"/>
<path d="M739 413h1v17h-1zM741 417h1v7h-1zM743 419h1v4h-1z" fill="#4a3c00"/>
<path d="M738 406h1v27h-1zM740 416h1v9h-1zM742 419h1v4h-1z" fill="#8a6e00"/>
<path d="M24 9h12v3h-12zM24 9h3v13h-3zM24 19h12v3h-12zM32 15h4v7h-4zM31 15h5v2h-5z" fill="#ffffff"/>
<path d="M37 10h3v8h-3zM41 10h3v8h-3zM46 10h3v8h-3zM37 15h12v3h-12z" fill="#ffffff"/>
<path d="M37 19h13v3h-13z" fill="#e87000"/>
<path d="M53 9h3v13h-3z" fill="#ffffff"/>
<path d="M58 9h3v13h-3zM58 9h11v3h-11zM66 9h3v13h-3z" fill="#ffffff"/>
<path d="M70 9h11v3h-11zM70 9h3v7h-3zM70 14h11v3h-11zM78 14h3v8h-3zM70 19h11v3h-11z" fill="#ffffff"/>
<path d="M82 9h11v3h-11zM86 9h3v13h-3z" fill="#ffffff"/>
<path d="M94 9h10v3h-10zM94 9h3v13h-3zM94 14h9v3h-9zM94 19h10v3h-10z" fill="#ffffff"/>
<path d="M104 9h3v5l5-5h2.5v1l-5.5 5.5 6 6.5h-3l-5-5v5h-3z" fill="#fff"/>
<path d="M145.5 40 V519" stroke="#ffe800" stroke-width="1" stroke-dasharray="4 4"/>
<path d="M511.5 40 V519" stroke="#ffe800" stroke-width="1"/>
<rect x="135" y="216" width="20" height="1" fill="#ffe800" />
<rect x="501" y="209" width="20" height="1" fill="#ffe800" />
<ellipse cx="153" cy="45.5" rx="5.4" ry="5.7780000000000005" fill="#ff3000"/>
<path d="M150.69 43.96 L153.31 41.49 V50.51" fill="none" stroke="#000" stroke-width="2.01" stroke-linejoin="miter"/>
<ellipse cx="504" cy="45.5" rx="5.4" ry="5.7780000000000005" fill="#ff3000"/>
<path d="M501.22 43.80 C501.22 40.72 506.93 40.72 506.93 43.65 C506.93 45.89 501.38 47.43 501.22 49.36 H507.24" fill="none" stroke="#000" stroke-width="1.47"/>
<path d="M523 40 L536 40 L529.5 47z" fill="#ffc800"/>
<path d="M392.5 40.5 L399.5 47.5 L406.5 40.5" fill="none" stroke="#ffc800" stroke-width="1.2"/>
<path d="M774 322.5 L767 329.5 L774 336.5z" fill="#ffc800"/>
<path d="M3 390 H16 L22 396 L16 402 H3z" fill="#ffc800" stroke="#000" stroke-width="1"/>
<path d="M9.10 394.40 L11.82 391.84 V401.20" fill="none" stroke="#000" stroke-width="2.08" stroke-linejoin="miter"/>
<rect x="36.5" y="52.5" width="231" height="65" rx="5" fill="#000" fill-opacity="0" stroke="#fff" stroke-width="1"/>
<ellipse cx="46" cy="64.6" rx="5.2" ry="5.564000000000001" fill="#ff3000"/>
<path d="M43.77 63.11 L46.30 60.74 V69.43" fill="none" stroke="#000" stroke-width="1.93" stroke-linejoin="miter"/>
<ellipse cx="46" cy="84.6" rx="5.2" ry="5.564000000000001" fill="#ff3000"/>
<path d="M43.33 82.97 C43.33 79.99 48.82 79.99 48.82 82.82 C48.82 84.97 43.47 86.46 43.33 88.31 H49.12" fill="none" stroke="#000" stroke-width="1.41"/>
<rect x="249" y="7" width="300" height="26" fill="#fff" />
<rect x="250" y="8" width="298" height="24" fill="#000" />
<path d="M298.0 17.4 L299.0 17.5 L300.0 17.9 L301.0 18.5 L302.0 19.2 L303.0 20.1 L304.0 21.0 L305.0 21.9 L306.0 22.8 L307.0 23.5 L308.0 24.1 L309.0 24.5 L310.0 24.6 L311.0 24.5 L312.0 24.1 L313.0 23.5 L314.0 22.8 L315.0 21.9 L316.0 21.0 L317.0 20.1 L318.0 19.2 L319.0 18.5 L320.0 17.9 L321.0 17.5 L322.0 17.4 L323.0 17.5 L324.0 17.9 L325.0 18.5 L326.0 19.2 L327.0 20.1 L328.0 21.0 L329.0 21.9 L330.0 22.8 L331.0 23.5 L332.0 24.1 L333.0 24.5 L334.0 24.6 L335.0 24.5 L336.0 24.1 L337.0 23.5 L338.0 22.8 L339.0 21.9 L340.0 21.0 L341.0 20.1 L342.0 19.2 L343.0 18.5 L344.0 17.9 L345.0 17.5 L346.0 17.4 L347.0 17.5 L348.0 17.9 L349.0 18.5 L350.0 19.2 L351.0 20.1 L352.0 21.0 L353.0 21.9 L354.0 22.8 L355.0 23.5 L356.0 24.1 L357.0 24.5 L358.0 24.6 L359.0 24.5 L360.0 24.1 L361.0 23.5 L362.0 22.8 L363.0 21.9 L364.0 21.0 L365.0 20.1 L366.0 19.2 L367.0 18.5 L368.0 17.9 L369.0 17.5 L370.0 17.4 L371.0 17.5 L372.0 17.9 L373.0 18.5 L374.0 19.2 L375.0 20.1 L376.0 21.0 L377.0 21.9 L378.0 22.8 L379.0 23.5 L380.0 24.1 L381.0 24.5 L382.0 24.6 L383.0 24.5 L384.0 24.1 L385.0 23.5 L386.0 22.8 L387.0 21.9 L388.0 21.0 L389.0 20.1 L390.0 19.2 L391.0 18.5 L392.0 17.9 L393.0 17.5 L394.0 17.4 L395.0 17.5 L396.0 17.9 L397.0 18.5 L398.0 19.2 L399.0 20.1 L400.0 21.0 L401.0 21.9 L402.0 22.8 L403.0 23.5 L404.0 24.1 L405.0 24.5 L406.0 24.6 L407.0 24.5 L408.0 24.1 L409.0 23.5 L410.0 22.8 L411.0 21.9 L412.0 21.0 L413.0 20.1 L414.0 19.2 L415.0 18.5 L416.0 17.9 L417.0 17.5 L418.0 17.4 L419.0 17.5 L420.0 17.9 L421.0 18.5 L422.0 19.2 L423.0 20.1 L424.0 21.0 L425.0 21.9 L426.0 22.8 L427.0 23.5 L428.0 24.1 L429.0 24.5 L430.0 24.6 L431.0 24.5 L432.0 24.1 L433.0 23.5 L434.0 22.8 L435.0 21.9 L436.0 21.0 L437.0 20.1 L438.0 19.2 L439.0 18.5 L440.0 17.9 L441.0 17.5 L442.0 17.4 L443.0 17.5 L444.0 17.9 L445.0 18.5 L446.0 19.2 L447.0 20.1 L448.0 21.0 L449.0 21.9 L450.0 22.8 L451.0 23.5 L452.0 24.1 L453.0 24.5 L454.0 24.6 L455.0 24.5 L456.0 24.1 L457.0 23.5 L458.0 22.8 L459.0 21.9 L460.0 21.0 L461.0 20.1 L462.0 19.2 L463.0 18.5 L464.0 17.9 L465.0 17.5 L466.0 17.4 L467.0 17.5 L468.0 17.9 L469.0 18.5 L470.0 19.2 L471.0 20.1 L472.0 21.0 L473.0 21.9 L474.0 22.8 L475.0 23.5 L476.0 24.1 L477.0 24.5 L478.0 24.6 L479.0 24.5 L480.0 24.1 L481.0 23.5 L482.0 22.8 L483.0 21.9 L484.0 21.0 L485.0 20.1 L486.0 19.2 L487.0 18.5 L488.0 17.9 L489.0 17.5 L490.0 17.4 L491.0 17.5 L492.0 17.9 L493.0 18.5 L494.0 19.2 L495.0 20.1 L496.0 21.0 L497.0 21.9 L498.0 22.8" fill="none" stroke="#f0c000" stroke-width="1.0" stroke-opacity="1"/>
<rect x="352" y="11" width="94" height="18" fill="none" stroke="#e07000" stroke-width="2"/>
<path d="M411.5 8 H419.5 L415.5 13z" fill="#30e0f0"/>
<rect x="558.5" y="7.5" width="49" height="25" rx="4" fill="none" stroke="#ff1818" stroke-width="1"/>
<rect x="617.5" y="7.5" width="37" height="25" rx="4" fill="none" stroke="#5ee89a" stroke-width="1"/>
<path d="M624 25h5v2h-5zM627 14h2v13h-2zM627 14h17v2h-17zM628 13h2v1h-2zM632 13h2v1h-2zM636 13h2v1h-2zM640 13h2v1h-2zM630 16h2v1h-2zM634 16h2v1h-2zM638 16h2v1h-2zM642 14h2v13h-2zM642 25h5v2h-5z" fill="#64f0a0"/>
<rect x="669.5" y="2.5" width="105" height="35" rx="4" fill="#000" stroke="#fff" stroke-width="1"/>
<rect x="643.5" y="458.5" width="129" height="18" rx="4" fill="#000" stroke="#fff" stroke-width="1"/>
<rect x="645" y="460" width="23" height="15" rx="7" fill="#fff"/>
<text x="656.8" y="473.6" fill="#000" font-family="Liberation Sans" font-weight="bold" font-size="16" text-anchor="middle">F</text>
<rect x="26.5" y="479.5" width="746" height="38" rx="4" fill="#000" stroke="#fff" stroke-width="1"/>
<ellipse cx="36" cy="489.3" rx="7" ry="7.49" fill="#ffc800"/>
<path d="M33.00 487.30 L36.40 484.10 V495.80" fill="none" stroke="#000" stroke-width="2.60" stroke-linejoin="miter"/>
<ellipse cx="222.5" cy="489.3" rx="7" ry="7.49" fill="#ffc800"/>
<path d="M219.50 487.30 L222.90 484.10 V495.80" fill="none" stroke="#000" stroke-width="2.60" stroke-linejoin="miter"/>
<ellipse cx="408" cy="489.3" rx="7" ry="7.49" fill="#ffc800"/>
<path d="M405.00 487.30 L408.40 484.10 V495.80" fill="none" stroke="#000" stroke-width="2.60" stroke-linejoin="miter"/>
<ellipse cx="593.5" cy="489.3" rx="7" ry="7.49" fill="#20e8f0"/>
<path d="M589.90 487.10 C589.90 483.10 597.30 483.10 597.30 486.90 C597.30 489.80 590.10 491.80 589.90 494.30 H597.70" fill="none" stroke="#000" stroke-width="1.90"/>
<ellipse cx="36" cy="507.3" rx="7" ry="7.49" fill="#20e8f0"/>
<path d="M32.40 505.10 C32.40 501.10 39.80 501.10 39.80 504.90 C39.80 507.80 32.60 509.80 32.40 512.30 H40.20" fill="none" stroke="#000" stroke-width="1.90"/>
<ellipse cx="222.5" cy="507.3" rx="7" ry="7.49" fill="#20e8f0"/>
<path d="M218.90 505.10 C218.90 501.10 226.30 501.10 226.30 504.90 C226.30 507.80 219.10 509.80 218.90 512.30 H226.70" fill="none" stroke="#000" stroke-width="1.90"/>
<rect x="1.5" y="521.5" width="418" height="19" rx="5" fill="#000" stroke="#fff" stroke-width="1"/>
<ellipse cx="10" cy="531" rx="7" ry="7.49" fill="#ffc800"/>
<path d="M7.00 529.00 L10.40 525.80 V537.50" fill="none" stroke="#000" stroke-width="2.60" stroke-linejoin="miter"/>
<rect x="30" y="528" width="14" height="2" fill="#ffc800" />
<rect x="30" y="532" width="4" height="2" fill="#ffc800" />
<rect x="35" y="532" width="4" height="2" fill="#ffc800" />
<rect x="40" y="532" width="4" height="2" fill="#ffc800" />
<ellipse cx="117" cy="531" rx="7" ry="7.49" fill="#20e8f0"/>
<path d="M113.40 528.80 C113.40 524.80 120.80 524.80 120.80 528.60 C120.80 531.50 113.60 533.50 113.40 536.00 H121.20" fill="none" stroke="#000" stroke-width="1.90"/>
<rect x="137" y="528" width="14" height="2" fill="#20e8f0" />
<rect x="137" y="532" width="4" height="2" fill="#20e8f0" />
<rect x="142" y="532" width="4" height="2" fill="#20e8f0" />
<rect x="147" y="532" width="4" height="2" fill="#20e8f0" />
<ellipse cx="223.5" cy="531" rx="7" ry="7.49" fill="#505050"/>
<text x="223.8" y="536.04" fill="#000" font-family="Liberation Sans" font-weight="bold" font-size="14" text-anchor="middle">3</text>
<rect x="243.5" y="528" width="14" height="2" fill="#505050" />
<rect x="243.5" y="532" width="4" height="2" fill="#505050" />
<rect x="248.5" y="532" width="4" height="2" fill="#505050" />
<rect x="253.5" y="532" width="4" height="2" fill="#505050" />
<ellipse cx="330.5" cy="531" rx="7" ry="7.49" fill="#505050"/>
<text x="330.8" y="536.04" fill="#000" font-family="Liberation Sans" font-weight="bold" font-size="14" text-anchor="middle">4</text>
<rect x="350.5" y="528" width="14" height="2" fill="#505050" />
<rect x="350.5" y="532" width="4" height="2" fill="#505050" />
<rect x="355.5" y="532" width="4" height="2" fill="#505050" />
<rect x="360.5" y="532" width="4" height="2" fill="#505050" />
<rect x="425.5" y="521.5" width="167" height="19" rx="5" fill="#000" stroke="#fff" stroke-width="1"/>
<rect x="499.5" y="525.5" width="13" height="12" rx="3" fill="#fff"/>
<path d="M503 527.5 V535.5 M509 527.5 V535.5 M503 531.5 H509" stroke="#000" stroke-width="2"/>
<rect x="599.5" y="521.5" width="175" height="38" rx="5" fill="#000" stroke="#fff" stroke-width="1"/>
<ellipse cx="629" cy="531.5" rx="7" ry="7.49" fill="#ffc800"/>
<path d="M626.00 529.50 L629.40 526.30 V538.00" fill="none" stroke="#000" stroke-width="2.60" stroke-linejoin="miter"/>
<path d="M654 537.3 H658.7 V525.3 H663" fill="none" stroke="#ffc800" stroke-width="1.4"/>
<path d="M655 532 L658.7 528.8 L662.2 532" fill="none" stroke="#ffc800" stroke-width="1.1"/>
<rect x="17" y="543" width="108" height="56" rx="6" fill="#22f0fc" stroke="#0a1a80" stroke-width="2"/>
<rect x="58" y="573" width="26" height="19" rx="4" fill="#c8fcff"/>
<path d="M65.5 573 V592" stroke="#000" stroke-width="1.5" stroke-dasharray="2 1.5"/>
<path d="M77 573 V592" stroke="#000" stroke-width="1.6"/>
<path d="M61.5 98.5 L56.5 107.5 H66.5z" fill="none" stroke="#fff" stroke-width="1.3"/>
<path d="M153.5 98.5 L148.5 107.5 H158.5z" fill="none" stroke="#fff" stroke-width="1.3"/>
</svg>
<div style="position:absolute;left:68.32px;top:57px;font:normal 14.5px 'Liberation Mono';letter-spacing:-1.557px;color:#fff;-webkit-text-stroke:0.35px #fff;white-space:pre;line-height:1;transform:scaleX(1.12);transform-origin:0 0">-2.56us</div>
<div style="position:absolute;left:68.32px;top:77px;font:normal 14.5px 'Liberation Mono';letter-spacing:-1.557px;color:#fff;-webkit-text-stroke:0.35px #fff;white-space:pre;line-height:1;transform:scaleX(1.12);transform-origin:0 0">-125ns</div>
<div style="position:absolute;left:68.32px;top:97px;font:normal 14.5px 'Liberation Mono';letter-spacing:-1.557px;color:#fff;-webkit-text-stroke:0.35px #fff;white-space:pre;line-height:1;transform:scaleX(1.12);transform-origin:0 0">2.44us</div>
<div style="position:absolute;left:160.32px;top:57px;font:normal 14.5px 'Liberation Mono';letter-spacing:-1.557px;color:#fff;-webkit-text-stroke:0.35px #fff;white-space:pre;line-height:1;transform:scaleX(1.12);transform-origin:0 0">3.00V</div>
<div style="position:absolute;left:160.32px;top:77px;font:normal 14.5px 'Liberation Mono';letter-spacing:-1.557px;color:#fff;-webkit-text-stroke:0.35px #fff;white-space:pre;line-height:1;transform:scaleX(1.12);transform-origin:0 0">3.12V</div>
<div style="position:absolute;left:160.32px;top:97px;font:normal 14.5px 'Liberation Mono';letter-spacing:-1.557px;color:#fff;-webkit-text-stroke:0.35px #fff;white-space:pre;line-height:1;transform:scaleX(1.12);transform-origin:0 0">120mV</div>
<div style="position:absolute;left:676.9200000000001px;top:5.3px;font:normal 14.5px 'Liberation Mono';letter-spacing:-1.557px;color:#fff;-webkit-text-stroke:0.35px #fff;white-space:pre;line-height:1;transform:scaleX(1.12);transform-origin:0 0">26 Sep 2020</div>
<div style="position:absolute;left:698.82px;top:21px;font:normal 14.5px 'Liberation Mono';letter-spacing:-1.334px;color:#fff;-webkit-text-stroke:0.35px #fff;white-space:pre;line-height:1;transform:scaleX(1.12);transform-origin:0 0">15:32:53</div>
<div style="position:absolute;left:680.32px;top:461px;font:normal 14.5px 'Liberation Mono';letter-spacing:-1.557px;color:#fff;-webkit-text-stroke:0.35px #fff;white-space:pre;line-height:1;transform:scaleX(1.12);transform-origin:0 0">3.19608kHz</div>
<div style="position:absolute;left:44.32px;top:482px;font:normal 14.5px 'Liberation Mono';letter-spacing:-1.557px;color:#ffc800;-webkit-text-stroke:0.35px #ffc800;white-space:pre;line-height:1;transform:scaleX(1.12);transform-origin:0 0">Frequency 3.999MHz</div>
<div style="position:absolute;left:230.32px;top:482px;font:normal 14.5px 'Liberation Mono';letter-spacing:-1.557px;color:#ffc800;-webkit-text-stroke:0.35px #ffc800;white-space:pre;line-height:1;transform:scaleX(1.12);transform-origin:0 0">RiseTime 3.378ns</div>
<div style="position:absolute;left:416.32px;top:482px;font:normal 14.5px 'Liberation Mono';letter-spacing:-1.557px;color:#ffc800;-webkit-text-stroke:0.35px #ffc800;white-space:pre;line-height:1;transform:scaleX(1.12);transform-origin:0 0">FallTime 3.264ns</div>
<div style="position:absolute;left:602.32px;top:482px;font:normal 14.5px 'Liberation Mono';letter-spacing:-1.557px;color:#20e8f0;-webkit-text-stroke:0.35px #20e8f0;white-space:pre;line-height:1;transform:scaleX(1.12);transform-origin:0 0">Frequency ?</div>
<div style="position:absolute;left:44.32px;top:500px;font:normal 14.5px 'Liberation Mono';letter-spacing:-1.557px;color:#20e8f0;-webkit-text-stroke:0.35px #20e8f0;white-space:pre;line-height:1;transform:scaleX(1.12);transform-origin:0 0">RiseTime 28.14ns</div>
<div style="position:absolute;left:230.32px;top:500px;font:normal 14.5px 'Liberation Mono';letter-spacing:-1.557px;color:#20e8f0;-webkit-text-stroke:0.35px #20e8f0;white-space:pre;line-height:1;transform:scaleX(1.12);transform-origin:0 0">FallTime ?</div>
<div style="position:absolute;left:65.32px;top:525px;font:normal 14.5px 'Liberation Mono';letter-spacing:-1.557px;color:#ffc800;-webkit-text-stroke:0.35px #ffc800;white-space:pre;line-height:1;transform:scaleX(1.12);transform-origin:0 0">1V</div>
<div style="position:absolute;left:172.32px;top:525px;font:normal 14.5px 'Liberation Mono';letter-spacing:-1.557px;color:#20e8f0;-webkit-text-stroke:0.35px #20e8f0;white-space:pre;line-height:1;transform:scaleX(1.12);transform-origin:0 0">1V</div>
<div style="position:absolute;left:266.32px;top:525px;font:normal 14.5px 'Liberation Mono';letter-spacing:-1.557px;color:#505050;-webkit-text-stroke:0.35px #505050;white-space:pre;line-height:1;transform:scaleX(1.12);transform-origin:0 0">100mV</div>
<div style="position:absolute;left:373.32px;top:525px;font:normal 14.5px 'Liberation Mono';letter-spacing:-1.557px;color:#505050;-webkit-text-stroke:0.35px #505050;white-space:pre;line-height:1;transform:scaleX(1.12);transform-origin:0 0">100mV</div>
<div style="position:absolute;left:449.82px;top:525px;font:normal 14.5px 'Liberation Mono';letter-spacing:-1.557px;color:#fff;-webkit-text-stroke:0.35px #fff;white-space:pre;line-height:1;transform:scaleX(1.12);transform-origin:0 0">500ns</div>
<div style="position:absolute;left:522.32px;top:525px;font:normal 14.5px 'Liberation Mono';letter-spacing:-1.557px;color:#fff;-webkit-text-stroke:0.35px #fff;white-space:pre;line-height:1;transform:scaleX(1.12);transform-origin:0 0">-870.0ns</div>
<div style="position:absolute;left:679.32px;top:525px;font:normal 14.5px 'Liberation Mono';letter-spacing:-1.557px;color:#ffc800;-webkit-text-stroke:0.35px #ffc800;white-space:pre;line-height:1;transform:scaleX(1.12);transform-origin:0 0">1.12V</div>
<div style="position:absolute;left:754.32px;top:525px;font:normal 14.5px 'Liberation Mono';letter-spacing:-1.557px;color:#ffc800;-webkit-text-stroke:0.35px #ffc800;white-space:pre;line-height:1;transform:scaleX(1.12);transform-origin:0 0">DC</div>
<div style="position:absolute;left:566px;top:11.5px;font:bold 16px 'Liberation Sans';letter-spacing:-0.8px;color:#ff1818;white-space:pre;line-height:1">Stop</div>
<div style="position:absolute;left:33px;top:553px;font:normal 16px 'Liberation Sans';letter-spacing:0.8px;word-spacing:3.5px;color:#000;white-space:pre;line-height:1">H Cursor</div>
</body></html>
